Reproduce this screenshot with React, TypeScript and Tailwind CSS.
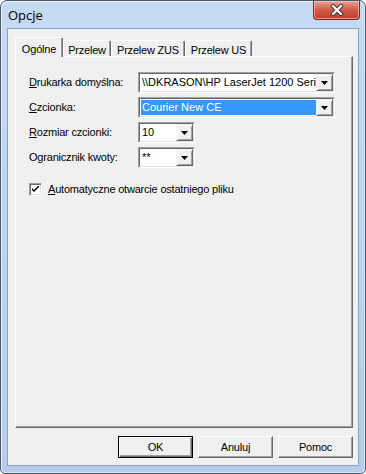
import React from 'react';

// ── Small classic (non-themed) controls inside an Aero frame ──────────────────
const FONT = { fontFamily: '"Liberation Sans", Arial, sans-serif' };

const Arrow: React.FC = () => (
  <svg width="7" height="4" viewBox="0 0 7 4" aria-hidden="true">
    <path d="M0 0h7L3.5 4z" fill="#000" />
  </svg>
);

const DropButton: React.FC = () => (
  <div className="flex h-full w-[17px] shrink-0 items-center justify-center border border-t-[#f0f0f0] border-l-[#f0f0f0] border-r-[#696969] border-b-[#696969] bg-[#f0f0f0] shadow-[inset_1px_1px_0_#fff,inset_-1px_-1px_0_#a0a0a0]">
    <Arrow />
  </div>
);

const Combo: React.FC<{ w: string; value: string; selected?: boolean }> = ({ w, value, selected }) => (
  <div className={`flex h-[21px] ${w} shrink-0 border border-t-[#a0a0a0] border-l-[#a0a0a0] border-r-white border-b-white`}>
    <div className="flex min-w-0 flex-1 border border-t-[#696969] border-l-[#696969] border-r-[#e3e3e3] border-b-[#e3e3e3] bg-white">
      <div className="flex min-w-0 flex-1 overflow-hidden py-[1px] pl-[1px] tracking-normal">
        <div
          className={
            selected
              ? 'flex min-w-0 flex-1 items-center overflow-hidden whitespace-nowrap bg-[#3399ff] pl-[1px] text-white'
              : 'flex min-w-0 flex-1 items-center overflow-hidden whitespace-nowrap pl-[1px] text-black'
          }
        >
          {value}
        </div>
      </div>
      <DropButton />
    </div>
  </div>
);

const Label: React.FC<{ u?: string; rest: string }> = ({ u, rest }) => (
  <span className="w-[109px] shrink-0 text-black">
    {u && <span className="underline underline-offset-[1px]">{u}</span>}
    {rest}
  </span>
);

const Tab: React.FC<{ label: string; w: string; active?: boolean }> = ({ label, w, active }) =>
  active ? (
    <div className={`flex h-[20px] ${w} items-start justify-center rounded-t-[2px] border-t border-l border-white border-r border-r-[#696969] bg-[#f0f0f0] pt-[3px] shadow-[inset_-1px_0_0_#a0a0a0]`}>
      {label}
    </div>
  ) : (
    <div className={`mb-px flex h-[16px] ${w} items-start justify-center rounded-t-[2px] border-t border-l border-white border-r border-r-[#696969] bg-[#f0f0f0] pt-[1px] shadow-[inset_-1px_0_0_#a0a0a0]`}>
      {label}
    </div>
  );

const Button: React.FC<{ label: string; isDefault?: boolean }> = ({ label, isDefault }) => (
  <div
    className={
      isDefault
        ? 'flex h-[22px] w-[75px] items-center justify-center border border-[#000] bg-[#f0f0f0] shadow-[inset_1px_1px_0_#fff,inset_-1px_-1px_0_#696969,inset_-2px_-2px_0_#a0a0a0]'
        : 'flex h-[22px] w-[75px] items-center justify-center border border-t-white border-l-white border-r-[#696969] border-b-[#696969] bg-[#f0f0f0] shadow-[inset_-1px_-1px_0_#a0a0a0]'
    }
  >
    {label}
  </div>
);

const CloseGlyph: React.FC = () => (
  <svg width="14" height="12" viewBox="0 0 14 12" aria-hidden="true">
    <path d="M3 2l8 8M11 2l-8 8" stroke="#3c3c3c" strokeWidth="4.4" strokeLinecap="round" />
    <path d="M3 2l8 8M11 2l-8 8" stroke="#fff" strokeWidth="2.4" strokeLinecap="round" />
  </svg>
);

// ── Dialog ─────────────────────────────────────────────────────────────────────
export default function App() {
  return (
    <div className="h-[474px] w-[366px] bg-white" style={FONT}>
      <div className="flex h-full w-full flex-col rounded-t-[7px] rounded-b-[5px] border border-[#4b5868] bg-gradient-to-b from-[#c4dbf4] via-[#bcd5f0] to-[#b5cdea] shadow-[inset_1px_1px_0_#e8f2fc,inset_-1px_-1px_0_#d8e7f7]">
        {/* Title bar */}
        <div className="flex h-[27px] shrink-0 items-start justify-between pl-[7px] pr-[5px]">
          <span className="mt-[5px] text-[13px] text-black" style={{ fontFamily: '"Open Sans", "Noto Sans", sans-serif' }}>
            Opcje
          </span>
          <div className="flex h-[19px] w-[47px] items-center justify-center rounded-b-[4px] border border-t-0 border-[#7a2a1d] bg-gradient-to-b from-[#e8a495] via-[#cf5a45] to-[#c2402c] shadow-[inset_0_0_0_1px_rgba(255,220,210,0.55)]">
            <CloseGlyph />
          </div>
        </div>

        {/* Client area */}
        <div className="mx-[6px] mb-[7px] flex flex-1 flex-col border border-[#8aa2bd] bg-[#f0f0f0] pl-[7px] pr-[5px] pt-[8px] text-[11px] tracking-[-0.2px]">
          {/* Tabs */}
          <div className="relative z-10 -mb-px flex h-[20px] items-end">
            <Tab label="Ogólne" w="w-[48px]" active />
            <Tab label="Przelew" w="w-[48px]" />
            <Tab label="Przelew ZUS" w="w-[74px]" />
            <Tab label="Przelew US" w="w-[67px]" />
          </div>

          {/* Tab page */}
          <div className="flex h-[372px] flex-col gap-[4px] border border-t-white border-l-white border-r-[#696969] border-b-[#696969] pl-[13px] pt-[15px] shadow-[inset_-1px_-1px_0_#a0a0a0]">
            <div className="flex items-center">
              <Label u="D" rest="rukarka domyślna:" />
              <Combo w="w-[197px]" value="\\DKRASON\HP LaserJet 1200 Series" />
            </div>
            <div className="flex items-center">
              <Label u="C" rest="zcionka:" />
              <Combo w="w-[197px]" value="Courier New CE" selected />
            </div>
            <div className="flex items-center">
              <Label u="R" rest="ozmiar czcionki:" />
              <Combo w="w-[57px]" value="10" />
            </div>
            <div className="flex items-center">
              <Label rest="Ogranicznik kwoty:" />
              <Combo w="w-[57px]" value="**" />
            </div>

            <div className="mt-[9px] flex items-center gap-[6px]">
              <div className="flex h-[13px] w-[13px] items-center justify-center border border-t-[#a0a0a0] border-l-[#a0a0a0] border-r-white border-b-white bg-white shadow-[inset_1px_1px_0_#696969,inset_-1px_-1px_0_#e3e3e3]">
                <svg width="7" height="7" viewBox="0 0 7 7" aria-hidden="true">
                  <path d="M0 2l2 2 5-5v2L2 6 0 4z" fill="#000" />
                </svg>
              </div>
              <span className="text-black">
                <span className="underline underline-offset-[1px]">A</span>utomatyczne otwarcie ostatniego pliku
              </span>
            </div>
          </div>

          {/* Buttons */}
          <div className="mt-[8px] flex justify-end gap-[5px] text-black">
            <Button label="OK" isDefault />
            <Button label="Anuluj" />
            <Button label="Pomoc" />
          </div>
        </div>
      </div>
    </div>
  );
}
